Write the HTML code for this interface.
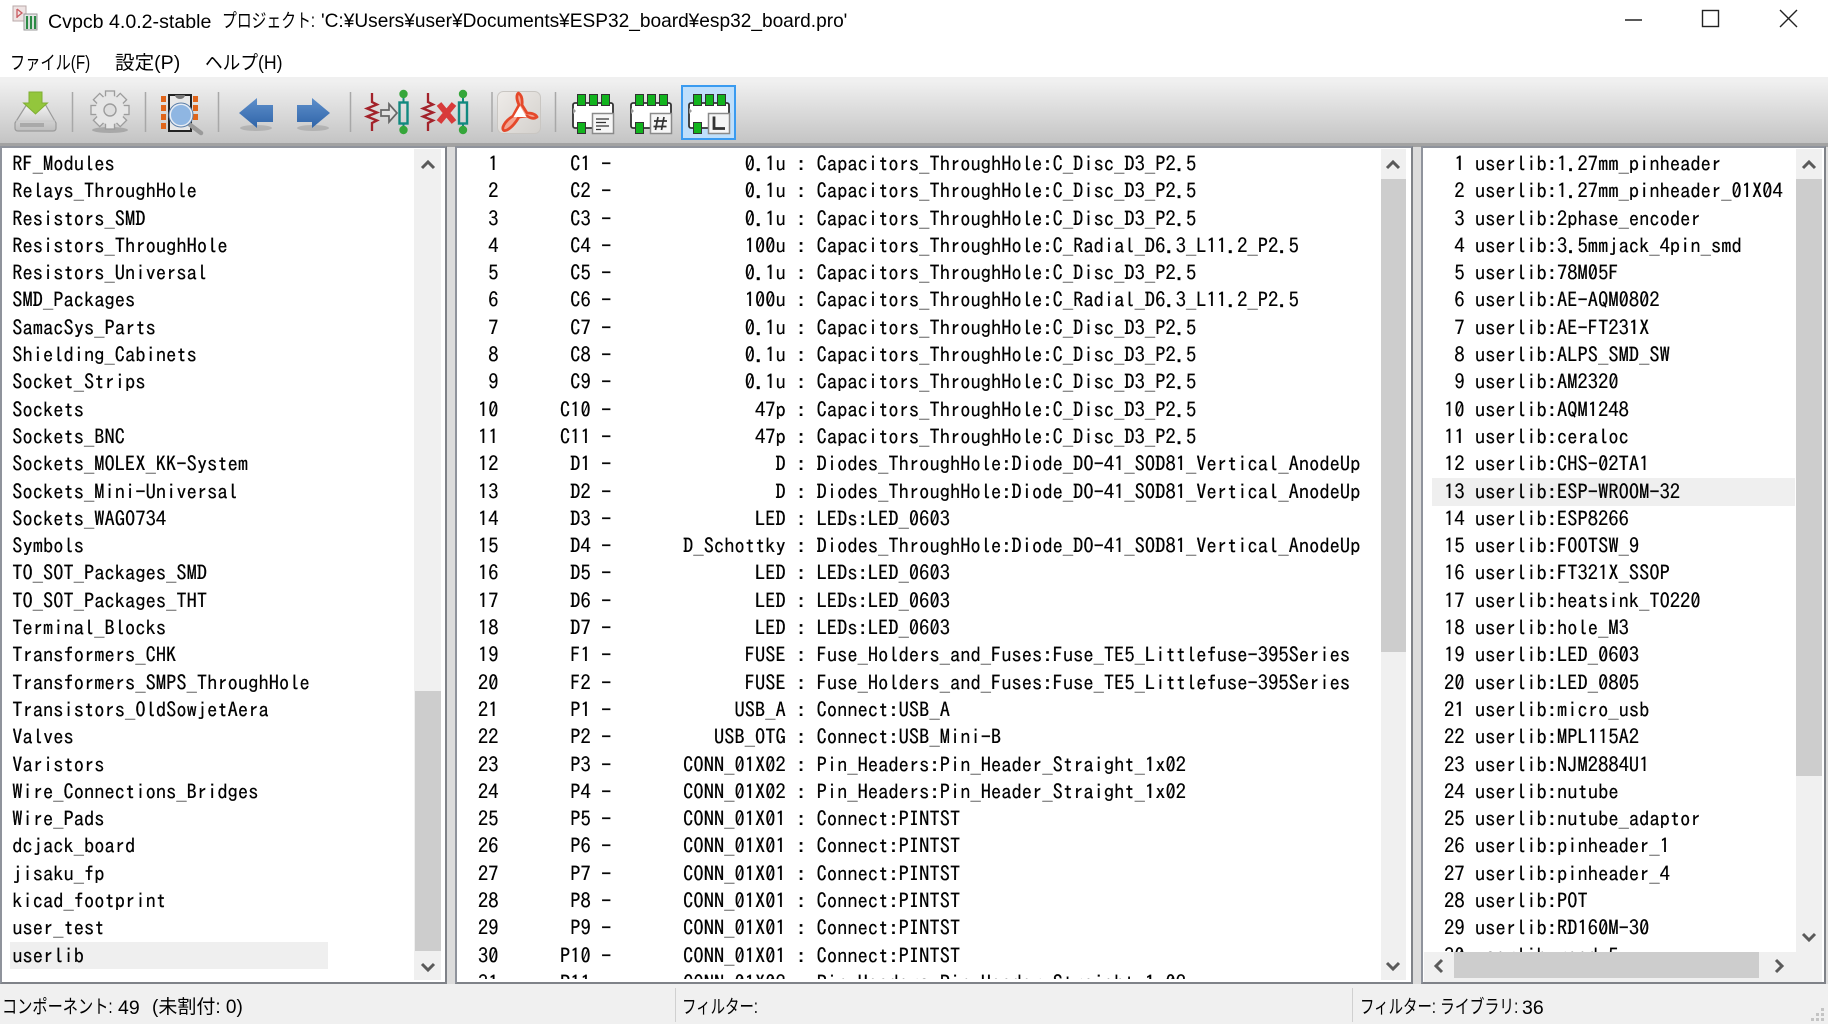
<!DOCTYPE html>
<html lang="ja"><head><meta charset="utf-8"><title>Cvpcb</title>
<style>
html,body{margin:0;padding:0;background:#fff}
#w{position:relative;width:1828px;height:1024px;overflow:hidden;background:#fff;filter:blur(.3px);font-family:"Liberation Sans","Noto Sans CJK JP",sans-serif;color:#000}
.a{position:absolute}
.t{position:absolute;white-space:pre;font-size:19px;line-height:26px;transform-origin:0 50%}
pre{position:absolute;margin:0;font-family:"IPAGothic",monospace;font-size:20.4px;letter-spacing:.066px;line-height:27.3px;color:#000;text-rendering:geometricPrecision;-webkit-text-stroke:.2px #000}
.panel{position:absolute;background:#fff;overflow:hidden;border:2px solid #8f939c;box-sizing:border-box;border-right-color:#7f8288;border-bottom-color:#7f8288}
.sb{position:absolute;background:#f0f0f0}
.th{position:absolute;background:#cdcdcd}
</style></head><body><div id="w">

<div class="t" style="left:48px;top:9px;font-size:19.6px">Cvpcb 4.0.2-stable</div>
<div class="t" style="left:222px;top:9px;transform:scaleX(.78)">プロジェクト:</div>
<div class="t" style="left:321px;top:9px;font-size:19.1px">'C:¥Users¥user¥Documents¥ESP32_board¥esp32_board.pro'</div>
<div class="t" style="left:10px;top:51px;transform:scaleX(.8)">ファイル(F)</div>
<div class="t" style="left:115px;top:51px;transform:scaleX(1.03)">設定(P)</div>
<div class="t" style="left:205px;top:51px;transform:scaleX(.93)">ヘルプ(H)</div>

<div class="a" style="left:0;top:77px;width:1828px;height:4px;background:#f0f0f0"></div>
<div class="a" style="left:0;top:81px;width:1828px;height:62px;background:linear-gradient(#f0f0f0,#c4c4c4)"></div>
<div class="a" style="left:0;top:143px;width:1828px;height:4px;background:#a2a2a2"></div>
<div class="a" style="left:0;top:147px;width:1828px;height:837px;background:#dcdcdc"></div>
<div class="a" style="left:0;top:984px;width:1828px;height:40px;background:#f0f0f0"></div>

<div class="panel" style="left:0;top:146px;width:447px;height:838px">
<pre style="left:10.2px;top:3px">RF_Modules
Relays_ThroughHole
Resistors_SMD
Resistors_ThroughHole
Resistors_Universal
SMD_Packages
SamacSys_Parts
Shielding_Cabinets
Socket_Strips
Sockets
Sockets_BNC
Sockets_MOLEX_KK-System
Sockets_Mini-Universal
Sockets_WAGO734
Symbols
TO_SOT_Packages_SMD
TO_SOT_Packages_THT
Terminal_Blocks
Transformers_CHK
Transformers_SMPS_ThroughHole
Transistors_OldSowjetAera
Valves
Varistors
Wire_Connections_Bridges
Wire_Pads
dcjack_board
jisaku_fp
kicad_footprint
user_test
userlib</pre>
</div>
<div class="a" style="left:10px;top:942px;width:318px;height:27px;background:#efefef;mix-blend-mode:multiply"></div>
<div class="sb" style="left:414px;top:149px;width:27px;height:831px"></div>
<div class="th" style="left:415px;top:691px;width:26px;height:260px"></div>

<div class="panel" style="left:455px;top:146px;width:958px;height:838px">
<pre style="left:10.7px;top:3px">  1       C1 -             0.1u : Capacitors_ThroughHole:C_Disc_D3_P2.5
  2       C2 -             0.1u : Capacitors_ThroughHole:C_Disc_D3_P2.5
  3       C3 -             0.1u : Capacitors_ThroughHole:C_Disc_D3_P2.5
  4       C4 -             100u : Capacitors_ThroughHole:C_Radial_D6.3_L11.2_P2.5
  5       C5 -             0.1u : Capacitors_ThroughHole:C_Disc_D3_P2.5
  6       C6 -             100u : Capacitors_ThroughHole:C_Radial_D6.3_L11.2_P2.5
  7       C7 -             0.1u : Capacitors_ThroughHole:C_Disc_D3_P2.5
  8       C8 -             0.1u : Capacitors_ThroughHole:C_Disc_D3_P2.5
  9       C9 -             0.1u : Capacitors_ThroughHole:C_Disc_D3_P2.5
 10      C10 -              47p : Capacitors_ThroughHole:C_Disc_D3_P2.5
 11      C11 -              47p : Capacitors_ThroughHole:C_Disc_D3_P2.5
 12       D1 -                D : Diodes_ThroughHole:Diode_DO-41_SOD81_Vertical_AnodeUp
 13       D2 -                D : Diodes_ThroughHole:Diode_DO-41_SOD81_Vertical_AnodeUp
 14       D3 -              LED : LEDs:LED_0603
 15       D4 -       D_Schottky : Diodes_ThroughHole:Diode_DO-41_SOD81_Vertical_AnodeUp
 16       D5 -              LED : LEDs:LED_0603
 17       D6 -              LED : LEDs:LED_0603
 18       D7 -              LED : LEDs:LED_0603
 19       F1 -             FUSE : Fuse_Holders_and_Fuses:Fuse_TE5_Littlefuse-395Series
 20       F2 -             FUSE : Fuse_Holders_and_Fuses:Fuse_TE5_Littlefuse-395Series
 21       P1 -            USB_A : Connect:USB_A
 22       P2 -          USB_OTG : Connect:USB_Mini-B
 23       P3 -       CONN_01X02 : Pin_Headers:Pin_Header_Straight_1x02
 24       P4 -       CONN_01X02 : Pin_Headers:Pin_Header_Straight_1x02
 25       P5 -       CONN_01X01 : Connect:PINTST
 26       P6 -       CONN_01X01 : Connect:PINTST
 27       P7 -       CONN_01X01 : Connect:PINTST
 28       P8 -       CONN_01X01 : Connect:PINTST
 29       P9 -       CONN_01X01 : Connect:PINTST
 30      P10 -       CONN_01X01 : Connect:PINTST
 31      P11 -       CONN_01X02 : Pin_Headers:Pin_Header_Straight_1x02</pre>
</div>
<div class="a" style="left:457px;top:979px;width:925px;height:3px;background:#fff"></div>
<div class="sb" style="left:1381px;top:149px;width:25px;height:831px"></div>
<div class="th" style="left:1381px;top:179px;width:25px;height:473px"></div>

<div class="panel" style="left:1421px;top:146px;width:405px;height:838px">
<div class="a" style="left:9px;top:330px;width:363px;height:28px;background:#efefef"></div>
<pre style="left:10.9px;top:3px">  1 userlib:1.27mm_pinheader
  2 userlib:1.27mm_pinheader_01X04
  3 userlib:2phase_encoder
  4 userlib:3.5mmjack_4pin_smd
  5 userlib:78M05F
  6 userlib:AE-AQM0802
  7 userlib:AE-FT231X
  8 userlib:ALPS_SMD_SW
  9 userlib:AM2320
 10 userlib:AQM1248
 11 userlib:ceraloc
 12 userlib:CHS-02TA1
 13 userlib:ESP-WROOM-32
 14 userlib:ESP8266
 15 userlib:FOOTSW_9
 16 userlib:FT321X_SSOP
 17 userlib:heatsink_TO220
 18 userlib:hole_M3
 19 userlib:LED_0603
 20 userlib:LED_0805
 21 userlib:micro_usb
 22 userlib:MPL115A2
 23 userlib:NJM2884U1
 24 userlib:nutube
 25 userlib:nutube_adaptor
 26 userlib:pinheader_1
 27 userlib:pinheader_4
 28 userlib:POT
 29 userlib:RD160M-30
 30 userlib:reed_5</pre>
</div>
<div class="sb" style="left:1796px;top:149px;width:26px;height:803px"></div>
<div class="th" style="left:1796px;top:179px;width:26px;height:597px"></div>
<div class="sb" style="left:1424px;top:952px;width:398px;height:30px"></div>
<div class="th" style="left:1454px;top:952px;width:305px;height:26px"></div>

<div class="t" style="left:2px;top:995px;transform:scaleX(.8)">コンポーネント:</div>
<div class="t" style="left:118px;top:995px;font-size:19.5px">49</div>
<div class="t" style="left:152px;top:995px">(未割付: 0)</div>
<div class="a" style="left:675px;top:988px;width:1px;height:34px;background:#d0d0d0"></div>
<div class="t" style="left:682px;top:995px;transform:scaleX(.76)">フィルター:</div>
<div class="a" style="left:1352px;top:988px;width:1px;height:34px;background:#d0d0d0"></div>
<div class="t" style="left:1360px;top:995px;transform:scaleX(.76)">フィルター:</div>
<div class="t" style="left:1440px;top:995px;transform:scaleX(.78)">ライブラリ:</div>
<div class="t" style="left:1522px;top:995px;font-size:19.5px">36</div>

<svg class="a" style="left:0;top:0" width="1828" height="1024" viewBox="0 0 1828 1024">
<defs>
<linearGradient id="g1" x1="0" y1="0" x2="0" y2="1"><stop offset="0" stop-color="#f4f4f4"/><stop offset="1" stop-color="#bdbdbd"/></linearGradient>
<linearGradient id="g2" x1="0" y1="0" x2="1" y2="1"><stop offset="0" stop-color="#efece9"/><stop offset="1" stop-color="#d3d0cc"/></linearGradient>
<linearGradient id="g3" x1="0" y1="0" x2="0" y2="1"><stop offset="0" stop-color="#5e8fcb"/><stop offset="1" stop-color="#2f64a8"/></linearGradient>
</defs>
<!-- app icon -->
<rect x="13" y="6" width="13" height="15" fill="#eee3e3" stroke="#b9a8a8"/>
<path d="M17 9v9M17 9l5 4-5 4" fill="none" stroke="#c95a60" stroke-width="1.3"/>
<rect x="24" y="14" width="13" height="16" fill="#e8e8e8" stroke="#999"/>
<path d="M27 16v13M31 16v13M35 16v13" stroke="#2b8a45" stroke-width="2.2"/>
<!-- window controls -->
<path d="M1625 20H1642" stroke="#222" stroke-width="1.4"/>
<rect x="1702.5" y="10.5" width="16" height="16" fill="none" stroke="#222" stroke-width="1.4"/>
<path d="M1780 10L1797 27M1797 10L1780 27" stroke="#222" stroke-width="1.4"/>
<!-- separators -->
<g stroke="#a8a8a8" stroke-width="1.5"><path d="M72.5 92V132M145.5 92V132M218.5 92V132M350.5 92V132M492 92V132M555.5 92V132"/></g>
<!-- save -->
<path d="M15 123L27 104H45L56 123V128Q56 131 53 131H18Q15 131 15 128Z" fill="url(#g1)" stroke="#9a9a9a" stroke-width="1.2"/>
<path d="M16 121H55" stroke="#c8c8c8"/>
<rect x="20" y="123" width="24" height="4" fill="#a9a9a9"/>
<path d="M29 92H42V103H47.5L35.5 114L23.5 103H29Z" fill="#93c63c" stroke="#7fae33"/>
<!-- gear -->
<ellipse cx="110" cy="130" rx="18" ry="3" fill="#8a8a8a" opacity=".55"/>
<g fill="#e6e6e6" stroke="#9c9c9c" stroke-width="1.3">
<rect x="105.5" y="91" width="9" height="38"/>
<rect x="105.5" y="91" width="9" height="38" transform="rotate(45 110 110)"/>
<rect x="105.5" y="91" width="9" height="38" transform="rotate(90 110 110)"/>
<rect x="105.5" y="91" width="9" height="38" transform="rotate(135 110 110)"/>
</g>
<circle cx="110" cy="110" r="14.5" fill="#e6e6e6"/>
<circle cx="110" cy="110" r="6" fill="#dedede" stroke="#9c9c9c" stroke-width="1.4"/>
<!-- chip + magnifier -->
<rect x="169" y="95" width="22" height="36" fill="#e8e8e8" stroke="#222" stroke-width="2"/>
<path d="M175 95a5 4 0 0 0 10 0" fill="#777"/>
<g fill="#e0651a"><rect x="161" y="96" width="5" height="6"/><rect x="161" y="105" width="5" height="6"/><rect x="161" y="114" width="5" height="6"/><rect x="161" y="123" width="5" height="6"/><rect x="193" y="96" width="5" height="6"/><rect x="193" y="105" width="5" height="6"/><rect x="193" y="114" width="5" height="6"/></g>
<path d="M189 124L201 133" stroke="#9a9a9a" stroke-width="4.5" stroke-linecap="round"/>
<circle cx="181" cy="115" r="11" fill="#8fb6e2" stroke="#e9eef5" stroke-width="2"/>
<circle cx="181" cy="115" r="12" fill="none" stroke="#5c7fa8" stroke-width="1"/>
<!-- arrows -->
<ellipse cx="256" cy="128" rx="16" ry="3" fill="#8a8a8a" opacity=".4"/>
<path d="M239 113L257 98V105H273V122H257V128Z" fill="url(#g3)"/>
<ellipse cx="313" cy="128" rx="16" ry="3" fill="#8a8a8a" opacity=".4"/>
<path d="M330 113L312 98V105H297V122H312V128Z" fill="url(#g3)"/>
<!-- resistor -> component -->
<g fill="none">
<path d="M372 93V102L377 104.5L367 108.5L377 112.5L367 116.5L377 120.5L372 123V131" stroke="#a3222a" stroke-width="2.3"/>
<path d="M381 110H389V104L397 113L389 122V116H381Z" stroke="#666" stroke-width="1.7" fill="#e2e2e2"/>
<path d="M403.5 98V103M403.5 123V127" stroke="#0f8a7a" stroke-width="2"/>
<rect x="399.5" y="102.5" width="8" height="21" stroke="#11897f" stroke-width="2.4"/>
</g>
<circle cx="403.5" cy="94" r="4.2" fill="#35a63a"/><circle cx="403.5" cy="130" r="4.2" fill="#35a63a"/>
<!-- resistor X component -->
<g fill="none">
<path d="M428 93V102L433 104.5L423 108.5L433 112.5L423 116.5L433 120.5L428 123V131" stroke="#a3222a" stroke-width="2.3"/>
<path d="M439 104L454 122M454 104L439 122" stroke="#d83a3a" stroke-width="6"/>
<path d="M463 98V103M463 123V127" stroke="#0f8a7a" stroke-width="2"/>
<rect x="459" y="102.5" width="8" height="21" stroke="#11897f" stroke-width="2.4"/>
</g>
<circle cx="463" cy="94" r="4.2" fill="#35a63a"/><circle cx="463" cy="130" r="4.2" fill="#35a63a"/>
<!-- pdf -->
<rect x="497.5" y="91.5" width="43" height="42" rx="6" fill="url(#g2)" stroke="#c9c6c2"/>
<path d="M518.5 93Q515 96 519 105L513 116Q505 121 503 127Q502 132 507 130Q513 127 519 117L527 116Q533 120 537 117Q535 113 527 113L522 105Q523 96 518.5 93Z" fill="#f3a593" stroke="#e5482a" stroke-width="2.8" stroke-linejoin="round"/>
<path d="M520 106L526.5 117H513.5Z" fill="#fff"/>
<!-- highlight -->
<rect x="682" y="86" width="53" height="53" fill="#bfdffb" stroke="#3a9bf0" stroke-width="2"/>
<!-- footprint buttons -->
<g>
<rect x="573" y="103" width="40" height="25" rx="2" fill="#fff" stroke="#333" stroke-width="1.8"/>
<path d="M573 108l3 3-3 3z" fill="#999"/>
<g fill="#12b41e" stroke="#333"><rect x="577.5" y="94.5" width="8" height="11"/><rect x="589.5" y="94.5" width="8" height="11"/><rect x="601.5" y="94.5" width="8" height="11"/><rect x="577.5" y="122.5" width="8" height="11"/></g>
</g>
<g transform="translate(58 0)">
<rect x="573" y="103" width="40" height="25" rx="2" fill="#fff" stroke="#333" stroke-width="1.8"/>
<path d="M573 108l3 3-3 3z" fill="#999"/>
<g fill="#12b41e" stroke="#333"><rect x="577.5" y="94.5" width="8" height="11"/><rect x="589.5" y="94.5" width="8" height="11"/><rect x="601.5" y="94.5" width="8" height="11"/><rect x="577.5" y="122.5" width="8" height="11"/></g>
</g>
<g transform="translate(116 0)">
<rect x="573" y="103" width="40" height="25" rx="2" fill="#fff" stroke="#333" stroke-width="1.8"/>
<path d="M573 108l3 3-3 3z" fill="#999"/>
<g fill="#12b41e" stroke="#333"><rect x="577.5" y="94.5" width="8" height="11"/><rect x="589.5" y="94.5" width="8" height="11"/><rect x="601.5" y="94.5" width="8" height="11"/><rect x="577.5" y="122.5" width="8" height="11"/></g>
</g>
<rect x="592.5" y="113.5" width="21" height="20" fill="#f6f6f6" stroke="#8a8a8a" stroke-width="1.5"/>
<path d="M596 119H609M596 122.5H606M596 126H609M596 129.5H601" stroke="#333" stroke-width="1.3"/>
<rect x="650.5" y="113.5" width="21" height="20" fill="#f6f6f6" stroke="#8a8a8a" stroke-width="1.5"/>
<path d="M658 117L655.5 130M664 117L661.5 130M654 121H667M653.5 126.5H666.5" stroke="#333" stroke-width="1.7"/>
<rect x="708.5" y="113.5" width="21" height="20" fill="#f6f6f6" stroke="#8a8a8a" stroke-width="1.5"/>
<path d="M714 116.5V128.5H725" fill="none" stroke="#333" stroke-width="2.8"/>
<!-- scroll arrows -->
<g fill="none" stroke="#5a5a5a" stroke-width="3">
<path d="M422 168L428 162L434 168"/><path d="M422 964L428 970L434 964"/>
<path d="M1387 168L1393 162L1399 168"/><path d="M1387 963L1393 969L1399 963"/>
<path d="M1803 168L1809 162L1815 168"/><path d="M1803 934L1809 940L1815 934"/>
<path d="M1442 960L1436 966L1442 972"/><path d="M1776 960L1782 966L1776 972"/>
</g>
<!-- grip -->
<g fill="#c4c4c4"><rect x="1821" y="1008" width="3" height="3"/><rect x="1816" y="1013" width="3" height="3"/><rect x="1821" y="1013" width="3" height="3"/><rect x="1811" y="1018" width="3" height="3"/><rect x="1816" y="1018" width="3" height="3"/><rect x="1821" y="1018" width="3" height="3"/></g>
</svg>
</div></body></html>
